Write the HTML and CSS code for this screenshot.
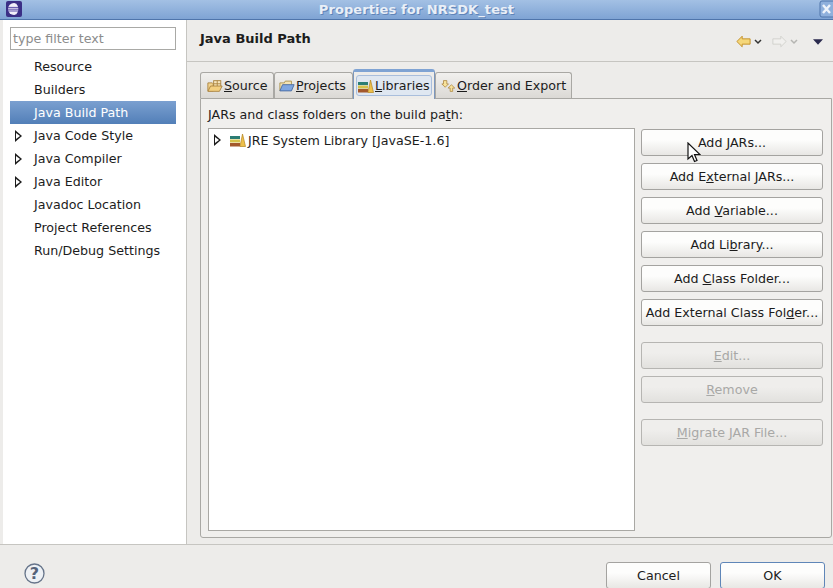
FILE: index.html
```html
<!DOCTYPE html>
<html lang="en">
  <head>
    <meta charset="UTF-8" />
    <title>Properties for NRSDK_test</title>
    <link rel="stylesheet" href="styles.css">
  </head>
  <body>
    <div class="window">
      <div class="titlebar">
        <svg class="app-icon" width="16" height="16" viewBox="0 0 16 16">
          <rect x="0" y="0" width="16" height="16" rx="2" fill="#3b2f86" />
          <circle cx="8" cy="8" r="6" fill="#f2f0fa" />
          <path d="M2 6.4h12M2 8.2h12M2 10h12" stroke="#5b4fa8" stroke-width="1" />
          <path d="M9 2a6 6 0 0 1 0 12a7 7 0 0 0 0-12z" fill="#3b2f86" />
        </svg>
        <span class="title">Properties for NRSDK_test</span>
        <svg class="close-icon" width="14" height="18" viewBox="0 0 14 18">
          <rect x="1" y="1" width="16" height="16" rx="2" fill="#8fb0dc" stroke="#4f75ab" />
          <path d="M4 5l7 8M11 5l-7 8" stroke="#eef3fa" stroke-width="2.4" />
        </svg>
      </div>

      <div class="main">
        <div class="sidebar">
          <div class="filter">type filter text</div>
          <ul class="tree">
            <li>Resource</li>
            <li>Builders</li>
            <li class="selected">Java Build Path</li>
            <li class="expandable">Java Code Style</li>
            <li class="expandable">Java Compiler</li>
            <li class="expandable">Java Editor</li>
            <li>Javadoc Location</li>
            <li>Project References</li>
            <li>Run/Debug Settings</li>
          </ul>
        </div>

        <div class="content">
          <div class="page-header">
            <h1>Java Build Path</h1>
            <div class="nav-icons">
              <svg width="15" height="13" viewBox="0 0 17 14">
                <path d="M1 7l6-6v3h9v6H7v3z" fill="#f5d77a" stroke="#c08a1e" />
              </svg>
              <svg class="chevron" width="8" height="6" viewBox="0 0 8 6">
                <path d="M1 1l3 3 3-3" fill="none" stroke="#333" stroke-width="1.5" />
              </svg>
              <svg class="nav-next" width="15" height="13" viewBox="0 0 17 14">
                <path d="M16 7l-6-6v3H1v6h9v3z" fill="#f1f0ee" stroke="#cfcfcb" />
              </svg>
              <svg class="chevron" width="8" height="6" viewBox="0 0 8 6">
                <path d="M1 1l3 3 3-3" fill="none" stroke="#b5b5b2" stroke-width="1.5" />
              </svg>
              <svg class="nav-menu" width="10" height="6" viewBox="0 0 11 6">
                <path d="M0 0h11L5.500 6z" fill="#2a2a4e" />
              </svg>
            </div>
          </div>

          <div class="tabs">
            <div class="tab tab-source">
              <svg width="16" height="14" viewBox="0 0 18 15">
                <path d="M1 4h5l1 1v8H1z" fill="#f3d48f" stroke="#a9823c" />
                <rect x="7.500" y="1.500" width="8" height="7" fill="#f7e6bd" stroke="#a9823c" />
                <path d="M11.500 1.500v7M7.500 5h8" stroke="#a9823c" />
                <path d="M1 13.500l3-6h13l-3 6z" fill="#f3cf80" stroke="#a9823c" />
              </svg>
              <span><u>S</u>ource</span>
            </div>
            <div class="tab tab-projects">
              <svg width="16" height="14" viewBox="0 0 18 15">
                <path d="M1 13V4h5l1-2h7v4" fill="#f3e3b5" stroke="#a9904c" />
                <path d="M1 13l3-7h13l-3 7z" fill="#7ea6e0" stroke="#47699f" />
              </svg>
              <span><u>P</u>rojects</span>
            </div>
            <div class="tab tab-libraries active">
              <div class="tab-focus">
                <svg width="16" height="14" viewBox="0 0 16 14">
                  <rect x="0" y="3" width="10" height="3" fill="#2c7d74" />
                  <rect x="0" y="6.500" width="10" height="3" fill="#d6c24a" />
                  <rect x="0" y="10" width="10" height="3.500" fill="#a3582c" />
                  <path d="M10 13.500L12.500 1l3 12.500z" fill="#eec04a" stroke="#b5851f" stroke-width=".7" />
                </svg>
                <span><u>L</u>ibraries</span>
              </div>
            </div>
            <div class="tab tab-order">
              <svg width="15" height="14" viewBox="0 0 18 15">
                <path d="M3 1h4v4h2L5 9 1 5h2z" fill="#f7e29a" stroke="#a9823c" stroke-width=".9" />
                <path d="M12.500 6l4 4H14v4h-3v-4H8.500z" fill="#f7e29a" stroke="#a9823c" stroke-width=".9" />
              </svg>
              <span><u>O</u>rder and Export</span>
            </div>
          </div>

          <div class="tab-panel">
            <div class="panel-label">JARs and class folders on the build pa<u>t</u>h:</div>
            <div class="panel-body">
              <div class="lib-tree">
                <div class="lib-row">
                  <span class="twisty"></span>
                  <svg width="16" height="14" viewBox="0 0 16 14">
                    <rect x="0" y="3" width="10" height="3" fill="#2c7d74" />
                    <rect x="0" y="6.500" width="10" height="3" fill="#d6c24a" />
                    <rect x="0" y="10" width="10" height="3.500" fill="#a3582c" />
                    <path d="M10 13.500L12.500 1l3 12.500z" fill="#eec04a" stroke="#b5851f" stroke-width=".7" />
                  </svg>
                  <span>JRE System Library [JavaSE-1.6]</span>
                </div>
              </div>
              <div class="buttons">
                <button class="btn">Add <u>J</u>ARs...</button>
                <button class="btn">Add E<u>x</u>ternal JARs...</button>
                <button class="btn">Add <u>V</u>ariable...</button>
                <button class="btn">Add Li<u>b</u>rary...</button>
                <button class="btn">Add <u>C</u>lass Folder...</button>
                <button class="btn">Add External Class Fol<u>d</u>er...</button>
                <button class="btn group-start" disabled><u>E</u>dit...</button>
                <button class="btn" disabled><u>R</u>emove</button>
                <button class="btn group-start" disabled><u>M</u>igrate JAR File...</button>
              </div>
            </div>
          </div>
        </div>
      </div>

      <div class="footer">
        <svg class="help" width="21" height="21" viewBox="0 0 21 21">
          <circle cx="10.500" cy="10.500" r="9.500" fill="#eef1f5" stroke="#66748a" stroke-width="1.300" />
          <text x="10.500" y="16" text-anchor="middle" class="help-mark">?</text>
        </svg>
        <div class="footer-buttons">
          <button class="btn dialog">Cancel</button>
          <button class="btn dialog default">OK</button>
        </div>
      </div>

      <!-- pointeur de la souris -->
      <svg class="cursor" width="14" height="22" viewBox="0 0 14 22">
        <path d="M1 1v16l4-3.500 2.500 6 2.500-1-2.500-6H13z" fill="#fff" stroke="#111" stroke-width="1.200" />
      </svg>
    </div>
  </body>
</html>
```

FILE: styles.css
```css
html,
body {
  margin: 0;
  padding: 0;
  height: 100%;
  overflow: hidden;
}

body {
  font-family: "DejaVu Sans", sans-serif;
  font-size: 12.67px;
  color: #1c1c1c;
  background-color: #edecea;
}

.window {
  position: relative;
  width: 833px;
  height: 588px;
  overflow: hidden;
  display: flex;
  flex-direction: column;
}

.titlebar {
  height: 19px;
  flex-shrink: 0;
  position: relative;
  display: flex;
  align-items: center;
  justify-content: center;
  background: linear-gradient(#a3c0e4, #7fa4d4);
  border-bottom: 1px solid #4f75ab;
}

.title {
  font-size: 13px;
  font-weight: bold;
  color: #e9eff7;
  text-shadow: 1px 1px 0 #5f84b8;
  letter-spacing: 0.08px;
}

.app-icon {
  position: absolute;
  left: 6px;
  top: 1px;
}

.close-icon {
  position: absolute;
  right: 0;
  top: 0;
}

.main {
  display: flex;
  height: 524px;
  flex-shrink: 0;
  border-bottom: 1px solid #c6c5c1;
}

.sidebar {
  width: 184px;
  margin-left: 3px;
  flex-shrink: 0;
  background-color: #fff;
  border-right: 1px solid #c6c5c1;
  box-sizing: border-box;
  padding: 7px 10px 0 7px;
}

.filter {
  height: 23px;
  line-height: 21px;
  box-sizing: border-box;
  border: 1px solid #a9a9a6;
  padding-left: 2px;
  color: #8c8c8c;
  width: 166px;
}

.tree {
  list-style: none;
  margin: 5px 0 0;
  padding: 0;
  width: 166px;
}

.tree li {
  position: relative;
  height: 23px;
  line-height: 23px;
  padding-left: 24px;
}

.tree .selected {
  color: #fff;
  background: linear-gradient(#7ba0d0, #527fb8);
}

.expandable::before,
.twisty {
  content: "";
  position: absolute;
  left: 5px;
  top: 6px;
  width: 0;
  height: 0;
  border-left: 7px solid #1c1c1c;
  border-top: 6px solid transparent;
  border-bottom: 6px solid transparent;
}

.twisty {
  top: 5px;
}

.expandable::after,
.twisty::after {
  content: "";
  position: absolute;
  left: 6px;
  top: 9px;
  width: 0;
  height: 0;
  border-left: 4px solid #fff;
  border-top: 3px solid transparent;
  border-bottom: 3px solid transparent;
}

.twisty::after {
  left: -6px;
  top: -3px;
}

.content {
  flex: 1;
  min-width: 0;
  background-color: #edecea;
  display: flex;
  flex-direction: column;
}

.page-header {
  height: 42px;
  flex-shrink: 0;
  box-sizing: border-box;
  border-bottom: 1px solid #c6c5c1;
  display: flex;
  justify-content: space-between;
  padding-left: 13px;
}

.page-header h1 {
  margin: 0;
  font-size: 13px;
  font-weight: bold;
  line-height: 38px;
}

.nav-icons {
  display: flex;
  align-items: center;
  padding: 2px 10px 0 0;
}

.chevron {
  margin-left: 3px;
}

.nav-next {
  margin-left: 10px;
}

.nav-menu {
  margin-left: 15px;
}

.tabs {
  display: flex;
  align-items: flex-end;
  height: 36px;
  flex-shrink: 0;
  margin-left: 13px;
}

.tab {
  height: 26px;
  box-sizing: border-box;
  background: linear-gradient(#f1f0ee, #dbd9d5);
  border: 1px solid #a9a8a4;
  border-bottom: none;
  border-radius: 3px 3px 0 0;
  display: flex;
  align-items: center;
  padding-left: 6px;
  white-space: nowrap;
  gap: 1px;
}

.tab-source {
  width: 74px;
}

.tab-projects {
  width: 79px;
  padding-left: 4px;
}

.tab-libraries {
  width: 82px;
}

.tab-order {
  width: 137px;
  padding-left: 5px;
}

.tab.active {
  background: #edecea;
  border-color: #7c97bd;
  border-top: 3px solid #7fa3d3;
  padding: 0 2px;
  position: relative;
  z-index: 1;
  margin-bottom: -1px;
  height: 30px;
}

.tab-focus {
  flex: 1;
  height: 19px;
  display: flex;
  align-items: center;
  gap: 1px;
  padding-left: 1px;
  border: 1px solid #a9bedc;
  border-radius: 3px;
  background-color: #dfe7f1;
}

.tab-panel {
  width: 632px;
  height: 440px;
  box-sizing: border-box;
  margin-left: 13px;
  border: 1px solid #a9a8a4;
  border-radius: 0 0 3px 3px;
  background-color: #f0efed;
  padding: 0 8px 0 7px;
}

.panel-label {
  height: 29px;
  line-height: 31px;
}

.panel-body {
  display: flex;
  gap: 6px;
}

.lib-tree {
  width: 427px;
  height: 403px;
  box-sizing: border-box;
  background-color: #fff;
  border: 1px solid #a9a8a4;
}

.lib-row {
  position: relative;
  display: flex;
  align-items: center;
  height: 22px;
  padding-left: 21px;
  gap: 2px;
}

.buttons {
  display: flex;
  flex-direction: column;
  gap: 7px;
  width: 182px;
  padding-top: 1px;
}

.btn {
  display: block;
  height: 27px;
  width: 100%;
  flex-shrink: 0;
  box-sizing: border-box;
  padding: 0;
  font-family: inherit;
  font-size: 12.67px;
  color: #1c1c1c;
  background: linear-gradient(#fdfdfc 40%, #e8e7e4);
  border: 1px solid #a4a3a0;
  border-radius: 3px;
  white-space: nowrap;
}

.btn[disabled] {
  color: #a8a8a6;
  background: linear-gradient(#efeeec 40%, #e2e1de);
  border-color: #b6b5b2;
}

.group-start {
  margin-top: 9px;
}

.footer {
  flex: 1;
  position: relative;
  background-color: #edecea;
}

.help {
  position: absolute;
  left: 24px;
  top: 18px;
}

.help-mark {
  font-family: "DejaVu Sans", sans-serif;
  font-size: 16px;
  font-weight: bold;
  fill: #56637a;
}

.footer-buttons {
  display: flex;
  gap: 9px;
  justify-content: flex-end;
  padding: 17px 8px 0 0;
}

.btn.dialog {
  width: 105px;
}

.btn.default {
  border-color: #5f86b8;
}

.cursor {
  position: absolute;
  left: 687px;
  top: 142px;
}
```
